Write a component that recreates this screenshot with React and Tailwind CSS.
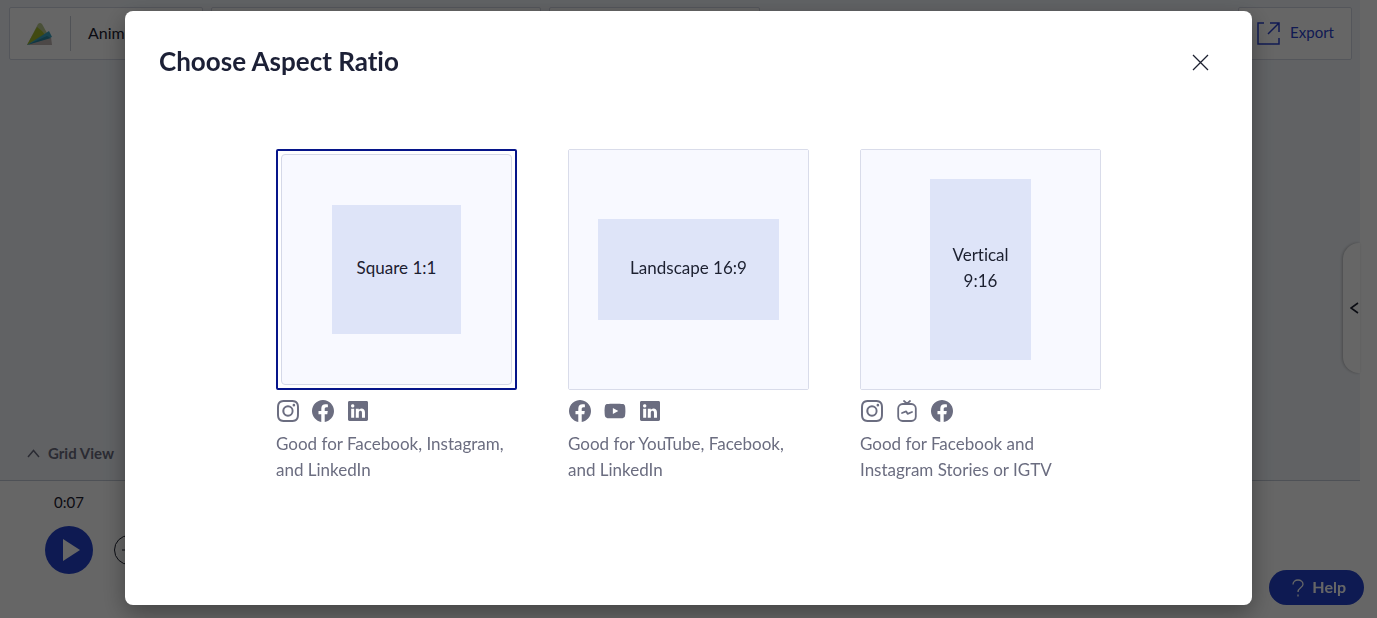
import React, { useState } from "react";
import {
  BsFacebook,
  BsInstagram,
  BsLinkedin,
} from "react-icons/bs";
import { FaYoutube } from "react-icons/fa";

const IgtvIcon = ({ size = 22 }) => (
  <svg width={size} height={size} viewBox="0 0 22 22" fill="none" stroke="currentColor" strokeWidth="1.8" strokeLinecap="round" strokeLinejoin="round">
    <rect x="2.2" y="4" width="17.6" height="17" rx="4.500" />
    <path d="M8 1l3 2.600L14 1" />
    <path d="M6 13l4.200-1.600 1.400 2.400L16 12" />
  </svg>
);

const LinkedinIcon = () => (
  <span className="flex size-[22px] items-center justify-center">
    <BsLinkedin size={20} />
  </span>
);

const LogoIcon = () => (
  <svg width="26" height="22" viewBox="0 0 26 22">
    <path d="M0 22L24 14l1 8z" fill="#bfb3b1" />
    <path d="M0 22L11 1q2-2 4 0l5 9z" fill="#b9c88c" />
    <path d="M0 22L10 4l5 4 3 4z" fill="#a3b82c" />
    <path d="M0 22L22 8l3 6z" fill="#3da5c2" />
    <path d="M0 22L20 13l4 2z" fill="#2b87a3" />
  </svg>
);

const RATIOS = [
  {
    id: "square",
    label: "Square 1:1",
    shape: "w-[129px] h-[129px]",
    icons: [BsInstagram, BsFacebook, LinkedinIcon],
    caption: "Good for Facebook, Instagram, and LinkedIn",
  },
  {
    id: "landscape",
    label: "Landscape 16:9",
    shape: "w-[181px] h-[101px]",
    icons: [BsFacebook, FaYoutube, LinkedinIcon],
    caption: "Good for YouTube, Facebook, and LinkedIn",
  },
  {
    id: "vertical",
    label: "Vertical 9:16",
    shape: "w-[101px] h-[181px] px-4",
    icons: [BsInstagram, IgtvIcon, BsFacebook],
    caption: "Good for Facebook and Instagram Stories or IGTV",
  },
];

const RatioCard = ({ ratio, selected, onSelect }) => (
  <div>
    <button
      type="button"
      aria-pressed={selected}
      onClick={onSelect}
      className={`block w-full aspect-square rounded-xs cursor-pointer ${
        selected ? "border-2 border-[#06158a] p-[3px]" : "border border-[#d9dcea]"
      }`}
    >
      <span
        className={`flex w-full h-full items-center justify-center bg-[#f8f9ff] ${
          selected ? "border border-[#d5d9e8] rounded" : ""
        }`}
      >
        <span className={`flex items-center justify-center bg-[#dee4f8] pb-1 text-[17px] leading-[26px] text-[#1c2030] ${ratio.shape}`}>
          {ratio.label}
        </span>
      </span>
    </button>
    <div className="flex gap-[13px] pl-px mt-[10px] text-[#6b6d80]">
      {ratio.icons.map((Icon, i) => (
        <Icon key={i} size={22} />
      ))}
    </div>
    <p className="mt-[9px] text-[17px] leading-[26px] text-[#6b6d80]">{ratio.caption}</p>
  </div>
);

const AspectRatioModal = () => {
  const [selected, setSelected] = useState("square");

  return (
    <div className="fixed inset-0 z-10 flex bg-black/60 px-[125px] pt-[11px] pb-[13px]">
      <div
        role="dialog"
        aria-modal="true"
        aria-labelledby="ratio-title"
        className="flex-1 rounded-lg bg-white px-[34px] pt-8 shadow-[0_8px_24px_rgba(0,0,0,0.35)]"
      >
        <div className="flex items-center justify-between">
          <h2 id="ratio-title" className="pb-0.5 text-[26px] leading-9 font-bold text-[#1c2036]">
            Choose Aspect Ratio
          </h2>
          <button type="button" aria-label="Close" className="mr-[9px] text-[#1c2030] cursor-pointer">
            <svg width="17" height="17" viewBox="0 0 17 17" stroke="currentColor" strokeWidth="1.3">
              <path d="M1 1l15 15M16 1L1 16" />
            </svg>
          </button>
        </div>
        <div className="mt-[68px] grid grid-cols-[repeat(3,241px)] justify-center gap-[51px]">
          {RATIOS.map((ratio) => (
            <RatioCard
              key={ratio.id}
              ratio={ratio}
              selected={selected === ratio.id}
              onSelect={() => setSelected(ratio.id)}
            />
          ))}
        </div>
      </div>
    </div>
  );
};

const Toolbar = () => (
  <header className="flex gap-2 pl-[9px] pr-2 pt-[7px] h-[60px]">
    <div className="flex items-center w-[194px] border border-[#d3d7e4] rounded-xs bg-white pl-[17px]">
      <LogoIcon />
      <span className="ml-[17px] h-[35px] w-px bg-[#c8ccd8]" />
      <span className="ml-[17px] pb-0.5 text-base">Animoto</span>
    </div>
    <div className="w-[330px] border border-[#d3d7e4] rounded-xs bg-white" />
    <div className="w-[211px] border border-[#d3d7e4] rounded-xs bg-white" />
    <button type="button" className="ml-auto flex items-center justify-end w-[114px] gap-[10px] border border-[#d3d7e4] rounded-xs bg-white pr-[17px] text-[15px] text-[#2b43cf]">
      <svg width="23" height="23" viewBox="0 0 23 23" fill="none" stroke="currentColor" strokeWidth="1.5">
        <path d="M7 1H1v21h21v-6M11 12L22 1M13 1h9v9" />
      </svg>
      <span className="pb-0.5">Export</span>
    </button>
  </header>
);

const Timeline = () => (
  <footer className="h-[138px] border-t border-[#c3cad6] bg-white pl-[45px] pt-[9px]">
    <div className="w-12 text-center text-[15px] leading-6">0:07</div>
    <div className="mt-3 flex items-center gap-[21px]">
      <button type="button" aria-label="Play" className="flex items-center justify-center size-12 rounded-full bg-[#2443cd] text-white">
        <svg width="17" height="22" viewBox="0 0 17 22" className="ml-1">
          <path d="M0 0l17 11L0 22z" fill="currentColor" />
        </svg>
      </button>
      <button type="button" aria-label="Add" className="flex items-center justify-center size-[30px] rounded-full border border-[#1c2030]">
        <svg width="14" height="14" viewBox="0 0 14 14" stroke="currentColor">
          <path d="M0 7h14M7 0v14" />
        </svg>
      </button>
    </div>
  </footer>
);

export default function App() {
  return (
    <div className="flex h-screen bg-white font-['Lato','Liberation_Sans',sans-serif] text-[#1c2030] [font-variant-ligatures:none]">
      <div className="relative flex flex-1 flex-col bg-[#f3f6fb]">
        <Toolbar />
        <div className="flex flex-1 items-end">
          <button type="button" className="flex items-center gap-2 pl-[27px] pb-[15px] text-[15px] leading-6 font-bold text-[#6b6d80]">
            <svg width="13" height="9" viewBox="0 0 13 9" fill="none" stroke="currentColor" strokeWidth="1.5">
              <path d="M1 8l5.500-6.500L12 8" />
            </svg>
            Grid View
          </button>
        </div>
        <Timeline />
        <button type="button" aria-label="Open panel" className="absolute right-0 top-[243px] flex h-[130px] w-[17px] items-center justify-end rounded-l-2xl bg-white pr-px shadow-[-1px_0_3px_rgba(0,0,0,0.25)]">
          <svg width="9" height="12" viewBox="0 0 9 12" fill="none" stroke="currentColor" strokeWidth="1.6">
            <path d="M8 1L1 6l7 5" />
          </svg>
        </button>
      </div>
      <aside className="w-[17px] bg-white shadow-[-1px_0_3px_rgba(0,0,0,0.25)]" />
      <button type="button" className="fixed right-[13px] bottom-[13px] flex h-[35px] w-[95px] items-center justify-end gap-2 rounded-full bg-[#2443cd] pr-[18px] text-base font-bold text-white">
        <svg width="12" height="18" viewBox="0 0 12 18" fill="none" stroke="currentColor" strokeWidth="1.3">
          <path d="M1 5.500C1 2.800 3.200 1 6 1s5 1.800 5 4.300C11 8.800 6 9 6 13M6 15.500v2" />
        </svg>
        <span className="pb-0.5">Help</span>
      </button>
      <AspectRatioModal />
    </div>
  );
}
